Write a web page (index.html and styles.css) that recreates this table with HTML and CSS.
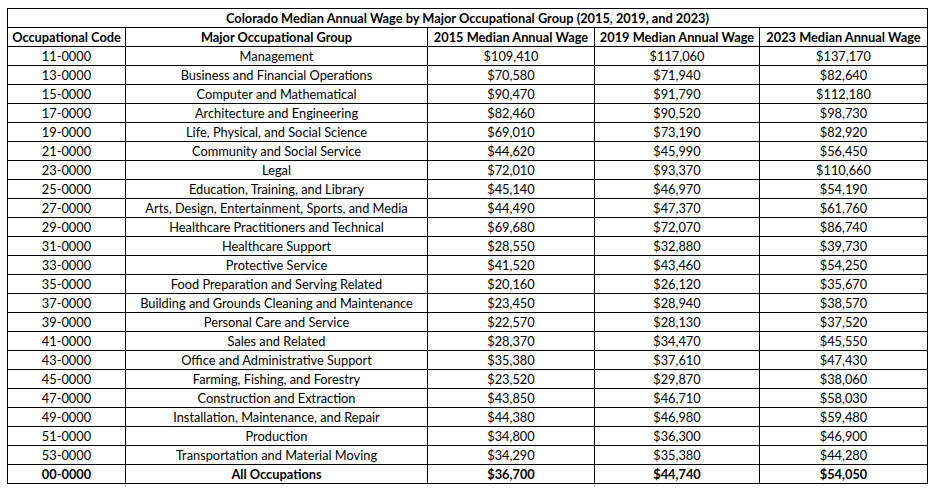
FILE: index.html
```html
<!DOCTYPE html>
<html>
<head>
<meta charset="utf-8">
<link rel="stylesheet" href="styles.css">
</head>
<body>
<table class="wage-table">
  <colgroup>
    <col class="c-code">
    <col class="c-group">
    <col class="c-w15">
    <col class="c-w19">
    <col class="c-w23">
  </colgroup>
  <thead>
    <tr class="title-row"><th colspan="5">Colorado Median Annual Wage by Major Occupational Group (2015, 2019, and 2023)</th></tr>
    <tr class="head-row">
      <th>Occupational Code</th>
      <th>Major Occupational Group</th>
      <th>2015 Median Annual Wage</th>
      <th>2019 Median Annual Wage</th>
      <th>2023 Median Annual Wage</th>
    </tr>
  </thead>
  <tbody>
    <tr><td>11-0000</td><td>Management</td><td>$109,410</td><td>$117,060</td><td>$137,170</td></tr>
    <tr><td>13-0000</td><td>Business and Financial Operations</td><td>$70,580</td><td>$71,940</td><td>$82,640</td></tr>
    <tr><td>15-0000</td><td>Computer and Mathematical</td><td>$90,470</td><td>$91,790</td><td>$112,180</td></tr>
    <tr><td>17-0000</td><td>Architecture and Engineering</td><td>$82,460</td><td>$90,520</td><td>$98,730</td></tr>
    <tr><td>19-0000</td><td>Life, Physical, and Social Science</td><td>$69,010</td><td>$73,190</td><td>$82,920</td></tr>
    <tr><td>21-0000</td><td>Community and Social Service</td><td>$44,620</td><td>$45,990</td><td>$56,450</td></tr>
    <tr><td>23-0000</td><td>Legal</td><td>$72,010</td><td>$93,370</td><td>$110,660</td></tr>
    <tr><td>25-0000</td><td>Education, Training, and Library</td><td>$45,140</td><td>$46,970</td><td>$54,190</td></tr>
    <tr><td>27-0000</td><td>Arts, Design, Entertainment, Sports, and Media</td><td>$44,490</td><td>$47,370</td><td>$61,760</td></tr>
    <tr><td>29-0000</td><td>Healthcare Practitioners and Technical</td><td>$69,680</td><td>$72,070</td><td>$86,740</td></tr>
    <tr><td>31-0000</td><td>Healthcare Support</td><td>$28,550</td><td>$32,880</td><td>$39,730</td></tr>
    <tr><td>33-0000</td><td>Protective Service</td><td>$41,520</td><td>$43,460</td><td>$54,250</td></tr>
    <tr><td>35-0000</td><td>Food Preparation and Serving Related</td><td>$20,160</td><td>$26,120</td><td>$35,670</td></tr>
    <tr><td>37-0000</td><td>Building and Grounds Cleaning and Maintenance</td><td>$23,450</td><td>$28,940</td><td>$38,570</td></tr>
    <tr><td>39-0000</td><td>Personal Care and Service</td><td>$22,570</td><td>$28,130</td><td>$37,520</td></tr>
    <tr><td>41-0000</td><td>Sales and Related</td><td>$28,370</td><td>$34,470</td><td>$45,550</td></tr>
    <tr><td>43-0000</td><td>Office and Administrative Support</td><td>$35,380</td><td>$37,610</td><td>$47,430</td></tr>
    <tr><td>45-0000</td><td>Farming, Fishing, and Forestry</td><td>$23,520</td><td>$29,870</td><td>$38,060</td></tr>
    <tr><td>47-0000</td><td>Construction and Extraction</td><td>$43,850</td><td>$46,710</td><td>$58,030</td></tr>
    <tr><td>49-0000</td><td>Installation, Maintenance, and Repair</td><td>$44,380</td><td>$46,980</td><td>$59,480</td></tr>
    <tr><td>51-0000</td><td>Production</td><td>$34,800</td><td>$36,300</td><td>$46,900</td></tr>
    <tr><td>53-0000</td><td>Transportation and Material Moving</td><td>$34,290</td><td>$35,380</td><td>$44,280</td></tr>
    <tr class="total-row"><td>00-0000</td><td>All Occupations</td><td>$36,700</td><td>$44,740</td><td>$54,050</td></tr>
  </tbody>
</table>
</body>
</html>
```

FILE: styles.css
```css
html, body {
  background: #ffffff;
}
body {
  margin: 0;
  padding: 8px 0 0 7px;
  font-family: Lato, "Open Sans", sans-serif;
  color: #000000;
}
.wage-table {
  border-collapse: collapse;
  table-layout: fixed;
  width: 920px;
  font-size: 12.8px;
}
.c-code { width: 118px; }
.c-group { width: 302px; }
.c-w15 { width: 167px; }
.c-w19 { width: 165px; }
.c-w23 { width: 168px; }
.wage-table th,
.wage-table td {
  border: 1px solid #000000;
  height: 18px;
  padding: 0;
  text-align: center;
  vertical-align: middle;
  line-height: 18px;
  white-space: nowrap;
  overflow: hidden;
}
.wage-table th {
  font-weight: 700;
}
.wage-table td {
  font-weight: 400;
}
.total-row td {
  font-weight: 700;
}
```
